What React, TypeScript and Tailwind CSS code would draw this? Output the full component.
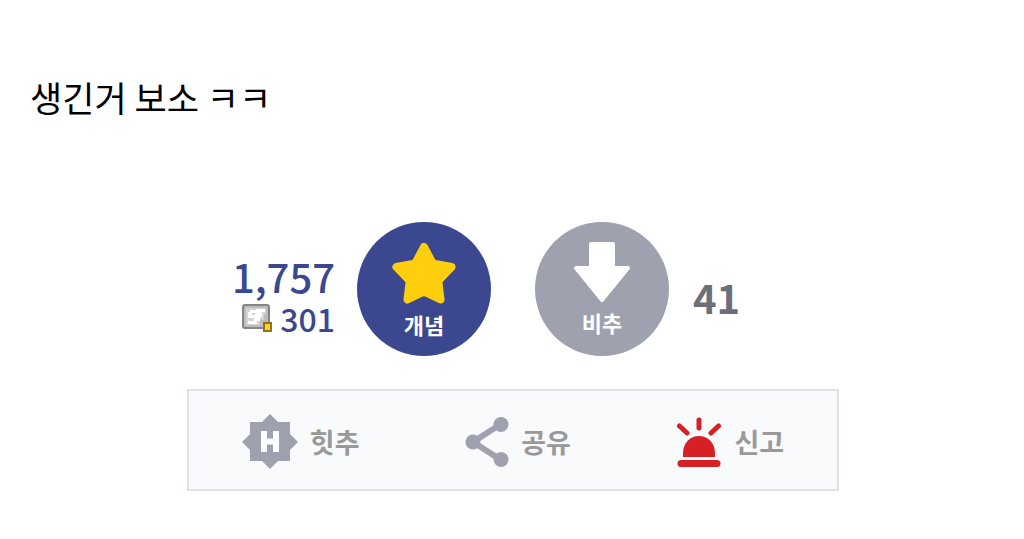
import React from 'react';

const StarIcon = () => (
  <svg width="66" height="64" viewBox="0 0 66 64" aria-hidden="true">
    <path
      d="M33 5 L41 20 Q42 21.500 44 22 L60.500 25 L49.500 36.500 Q47.500 38.500 47.500 41 L49.500 57.500 L36 51 Q33 49.500 30 51 L16.500 57.500 L18.500 41 Q18.500 38.500 16.500 36.500 L5.500 25 L22 22 Q24 21.500 25 20 Z"
      fill="#ffcf0d"
      stroke="#ffcf0d"
      strokeWidth="8"
      strokeLinejoin="round"
    />
  </svg>
);

const DownArrowIcon = () => (
  <svg width="58" height="62" viewBox="0 0 58 62" aria-hidden="true">
    <path
      d="M18 2 H40 V26 H55 L29 58 L3 26 H18 Z"
      fill="#fff"
      stroke="#fff"
      strokeWidth="4"
      strokeLinejoin="round"
    />
  </svg>
);

const MemberIcon = () => (
  <svg width="30" height="28" viewBox="0 0 30 28" aria-hidden="true">
    <rect x="1" y="1" width="26" height="23" rx="2" fill="#bdbdbd" stroke="#858585" strokeWidth="2" />
    <path d="M4 4 H24 V10 H22 V16 H18 V21 H4 Z" fill="#d4d4d4" />
    <path
      d="M8 6 H14 V5 H23 V8 H20 V13 H18 V17 H15 V20 H6 V17 H12 V14 H6 V8 H8 Z M10 9 V11 H13 V9 Z"
      fill="#fff"
      fillRule="evenodd"
    />
    <rect x="22" y="19" width="7" height="8" fill="#ffd21c" stroke="#927415" strokeWidth="2" />
  </svg>
);

const HitIcon = () => (
  <svg width="56" height="56" viewBox="0 0 56 56" aria-hidden="true">
    <path
      d="M28 0 L36 8 H48 V20 L56 28 L48 36 V47 H36 L28 55 L20 47 H8 V36 L0 28 L8 20 V8 H20 Z"
      fill="#9fa1ae"
    />
    <path d="M22 17 V38 M34 17 V38 M22 27.500 H34" fill="none" stroke="#fff" strokeWidth="6" />
  </svg>
);

const ShareIcon = () => (
  <svg width="44" height="52" viewBox="0 0 44 52" aria-hidden="true">
    <path d="M36 8 L8 26 L36 44" fill="none" stroke="#9fa1ae" strokeWidth="6" />
    <circle cx="36" cy="8.500" r="7.500" fill="#9fa1ae" />
    <circle cx="8" cy="26" r="7.500" fill="#9fa1ae" />
    <circle cx="36" cy="43.500" r="7.500" fill="#9fa1ae" />
  </svg>
);

const SirenIcon = () => (
  <svg width="46" height="52" viewBox="0 0 46 52" aria-hidden="true">
    <path
      d="M23 4 V12 M3.500 10 L11 17 M42.500 10 L35 17"
      fill="none"
      stroke="#d71f26"
      strokeWidth="5"
      strokeLinecap="round"
    />
    <path d="M7 41 V37 C7 27 14 20 23 20 C32 20 39 27 39 37 V41 Z" fill="#d71f26" />
    <path d="M5 47.500 H41" stroke="#d71f26" strokeWidth="7" strokeLinecap="round" />
  </svg>
);

const actions = [
  { name: '힛추', icon: <HitIcon /> },
  { name: '공유', icon: <ShareIcon /> },
  { name: '신고', icon: <SirenIcon /> },
];

const App = () => {
  return (
    <main className="bg-white pt-[71px] pr-7 pb-12 pl-[30px] font-['Noto_Sans_CJK_KR',sans-serif]">
      <p className="text-[35px] leading-[52px] text-black">생긴거 보소 ㅋㅋ</p>

      <section className="mt-[99px] grid grid-cols-[1fr_auto_auto_1fr] items-center">
        <div className="flex flex-col items-end pt-4 pr-[22px] font-medium text-[#3b488f]">
          <strong className="text-[40px] leading-[42px] font-medium">1,757</strong>
          <span className="flex items-center gap-2 text-[32px] leading-[42px]">
            <MemberIcon />
            301
          </span>
        </div>

        <button
          type="button"
          className="mr-11 flex size-[134px] flex-col items-center rounded-full bg-[#3b488f] pt-5 text-white"
        >
          <StarIcon />
          <span className="text-[22px] leading-9 font-bold">개념</span>
        </button>

        <button
          type="button"
          className="flex size-[134px] flex-col items-center rounded-full bg-[#9fa1ae] pt-5 text-white"
        >
          <DownArrowIcon />
          <span className="text-[22px] leading-9 font-bold">비추</span>
        </button>

        <span className="pt-4 pl-6 text-[40px] leading-[42px] font-bold text-[#6b6e7b]">41</span>
      </section>

      <div className="mx-auto mt-[33px] flex h-[102px] max-w-[652px] items-center justify-around border-2 border-[#dfe1ea] bg-[#f9fafc] pt-1">
        {actions.map((action) => (
          <button
            key={action.name}
            type="button"
            className="flex items-center gap-3 text-[27px] leading-10 font-bold text-[#999]"
          >
            {action.icon}
            {action.name}
          </button>
        ))}
      </div>
    </main>
  );
};

export default App;
